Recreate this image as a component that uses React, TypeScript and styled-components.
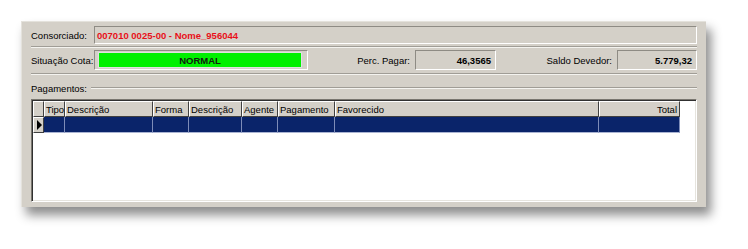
import React from "react";
import styled, { createGlobalStyle } from "styled-components";

const Global = createGlobalStyle`
  html, body { margin: 0; padding: 0; background: #ffffff; }
  body { font-family: "Liberation Sans", Arial, sans-serif; }
`;

const Page = styled.div`
  padding: 21px 0 0 21px;
  width: 748px;
  height: 249px;
  box-sizing: border-box;
`;

const Panel = styled.div`
  width: 685px;
  height: 186px;
  box-sizing: border-box;
  background: #d4d0c8;
  border-top: 1px solid #e4e2dc;
  border-left: 1px solid #e4e2dc;
  box-shadow: 5px 8px 10px rgba(0, 0, 0, 0.45);
  padding: 4px 9px 0 9px;
  display: flex;
  flex-direction: column;
  font-size: 9.5px;
  color: #000;
`;

const Row = styled.div<{ $h: number }>`
  display: flex;
  align-items: center;
  height: ${(p) => p.$h}px;
`;

const Label = styled.div<{ $w: number; $right?: boolean }>`
  width: ${(p) => p.$w}px;
  flex: none;
  box-sizing: border-box;
  text-align: ${(p) => (p.$right ? "right" : "left")};
  padding-right: ${(p) => (p.$right ? "5px" : "0")};
  white-space: nowrap;
`;

const Field = styled.div<{ $w: number; $h: number; $align?: string; $color?: string }>`
  width: ${(p) => p.$w}px;
  height: ${(p) => p.$h}px;
  box-sizing: border-box;
  border-top: 1px solid #8e8b84;
  border-left: 1px solid #8e8b84;
  border-right: 1px solid #ffffff;
  border-bottom: 1px solid #ffffff;
  display: flex;
  align-items: center;
  justify-content: ${(p) => p.$align || "flex-start"};
  padding: 0 4px 0 2px;
  font-weight: bold;
  color: ${(p) => p.$color || "#000"};
  white-space: nowrap;
`;

const StatusBar = styled.div`
  flex: 1;
  height: 14px;
  background: #00f000;
  border: 1px solid #e0e0e0;
  display: flex;
  align-items: center;
  justify-content: center;
  font-weight: bold;
  color: #102010;
  margin-left: 1px;
  margin-right: 1px;
`;

const Separator = styled.div<{ $mt: number }>`
  height: 0;
  margin-top: ${(p) => p.$mt}px;
  border-top: 1px solid #a09d96;
  border-bottom: 1px solid #f4f3ef;
`;

const GroupTitle = styled.div`
  display: flex;
  align-items: center;
  gap: 4px;
  height: 12px;
  margin-top: 7px;
`;

const GroupLine = styled.div`
  flex: 1;
  border-top: 1px solid #a09d96;
  border-bottom: 1px solid #f4f3ef;
`;

const Grid = styled.div`
  margin-top: 5px;
  height: 103px;
  box-sizing: border-box;
  background: #ffffff;
  border-top: 1px solid #7a7770;
  border-left: 1px solid #7a7770;
  border-right: 1px solid #ffffff;
  border-bottom: 1px solid #ffffff;
  box-shadow: inset 1px 1px 0 #303030, inset -1px -1px 0 #e6e4de;
  padding: 1px 0 0 1px;
`;

const cols = "11px 21px 88px 36px 53px 36px 57px 264px 81px";

const GridRow = styled.div<{ $h: number }>`
  display: grid;
  grid-template-columns: ${cols};
  height: ${(p) => p.$h}px;
`;

const HeadCell = styled.div<{ $right?: boolean }>`
  box-sizing: border-box;
  background: #d4d0c8;
  border-top: 1px solid #ffffff;
  border-left: 1px solid #ffffff;
  border-right: 1px solid #404040;
  border-bottom: 1px solid #404040;
  display: flex;
  align-items: center;
  justify-content: ${(p) => (p.$right ? "flex-end" : "flex-start")};
  padding: 0 2px 0 1px;
  white-space: nowrap;
  overflow: hidden;
`;

const DataCell = styled.div`
  box-sizing: border-box;
  background: #0a246a;
  border-right: 1px solid #7d8cb8;
  border-bottom: 1px solid #aab4d2;
`;

const Indicator = styled.div`
  box-sizing: border-box;
  background: #d4d0c8;
  border-top: 1px solid #ffffff;
  border-left: 1px solid #ffffff;
  border-right: 1px solid #404040;
  border-bottom: 1px solid #404040;
  display: flex;
  align-items: center;
  justify-content: center;
`;

const Arrow = styled.div`
  width: 0;
  height: 0;
  border-top: 5px solid transparent;
  border-bottom: 5px solid transparent;
  border-left: 5px solid #000;
  margin-left: 1px;
`;

const headers = ["Tipo", "Descrição", "Forma", "Descrição", "Agente", "Pagamento", "Favorecido", "Total"];

export default function App() {
  return (
    <>
      <Global />
      <Page>
        <Panel>
          <Row $h={18}>
            <Label $w={63}>Consorciado:</Label>
            <Field $w={603} $h={18} $color="#e8101a">007010 0025-00 - Nome_956044</Field>
          </Row>
          <Separator $mt={2} />
          <Row $h={24}>
            <Label $w={63}>Situação Cota:</Label>
            <Field $w={214} $h={20}>
              <StatusBar>NORMAL</StatusBar>
            </Field>
            <Label $w={107} $right>Perc. Pagar:</Label>
            <Field $w={81} $h={20} $align="flex-end">46,3565</Field>
            <Label $w={121} $right>Saldo Devedor:</Label>
            <Field $w={80} $h={20} $align="flex-end">5.779,32</Field>
          </Row>
          <Separator $mt={1} />
          <GroupTitle>
            <span>Pagamentos:</span>
            <GroupLine />
          </GroupTitle>
          <Grid>
            <GridRow $h={16}>
              <HeadCell />
              {headers.map((h, i) => (
                <HeadCell key={i} $right={h === "Total"}>{h}</HeadCell>
              ))}
            </GridRow>
            <GridRow $h={16}>
              <Indicator><Arrow /></Indicator>
              {headers.map((_, i) => (
                <DataCell key={i} />
              ))}
            </GridRow>
          </Grid>
        </Panel>
      </Page>
    </>
  );
}
